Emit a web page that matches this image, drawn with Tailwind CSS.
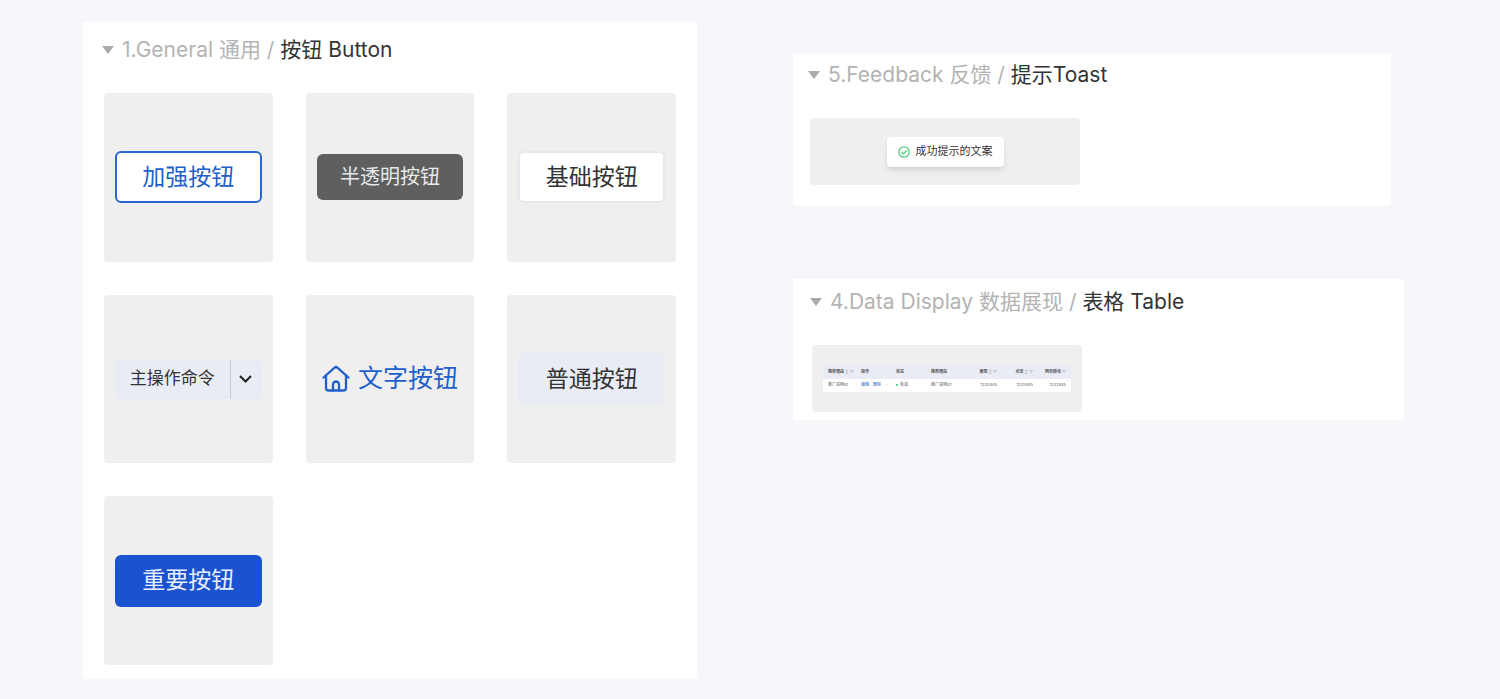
<!DOCTYPE html>
<html lang="zh-CN">

<head>
    <meta charset="UTF-8">
    <meta name="viewport" content="width=device-width, initial-scale=1.0">
    <title>组件库</title>
    <script src="https://cdn.jsdelivr.net/npm/@tailwindcss/browser@4"></script>
</head>

<body class="bg-[#f5f7fb] font-['Inter','Noto_Sans_CJK_SC',sans-serif] text-[#333]">

    <main class="grid grid-cols-[614fr_611fr] items-start gap-24 pt-[22px] pr-24 pb-5 pl-[83px]">

        <!-- Button -->
        <details open class="bg-white px-[21px] pt-[14px] pb-[14px]">
            <summary class="-ml-0.5 flex h-7 list-none items-center gap-2">
                <svg class="h-2 w-3" viewBox="0 0 12 8" fill="#aaa"><path d="M0 0h12L6 8z" /></svg>
                <h2 class="text-[21px] whitespace-pre"><span class="text-[#b3b3b3]">1.General 通用 / </span>按钮 Button</h2>
            </summary>
            <div class="mt-[29px] grid grid-cols-3 gap-x-[33px] gap-y-[33px]">
                <div class="flex aspect-square items-center rounded bg-[#efefef] px-[11px]">
                    <button class="h-[52px] w-full rounded-md border-2 border-[#2a66cf] bg-white text-[23px] text-[#2160cb]">加强按钮</button>
                </div>
                <div class="flex aspect-square items-center rounded bg-[#efefef] px-[11px]">
                    <button class="h-[46px] w-full rounded-md bg-[#5f5f5f] text-xl text-[#e8e8e8]">半透明按钮</button>
                </div>
                <div class="flex aspect-square items-center rounded bg-[#efefef] px-[11px]">
                    <button class="h-[52px] w-full rounded-md border-2 border-[#e6e8ef] bg-white text-[23px]">基础按钮</button>
                </div>
                <div class="flex aspect-square items-center rounded bg-[#efefef] px-[11px]">
                    <div class="flex h-[39px] w-full rounded bg-[#e9ecf5]">
                        <button class="flex-1 text-[17px]">主操作命令</button>
                        <button class="flex w-8 items-center justify-center border-l border-[#c8cad2]" aria-label="更多">
                            <svg class="h-3 w-4" viewBox="0 0 16 12" fill="none" stroke="#222" stroke-width="2"><path d="M2 3l5.500 5.500L13 3" /></svg>
                        </button>
                    </div>
                </div>
                <div class="flex aspect-square items-center rounded bg-[#efefef] px-[11px]">
                    <button class="flex w-full items-center justify-center gap-2 text-[25px] text-[#2160cb]">
                        <svg class="h-7 w-7" viewBox="0 0 28 28" fill="none" stroke="currentColor" stroke-width="2.300" stroke-linecap="round" stroke-linejoin="round">
                            <path d="M1.500 12.500L12.600 2.600a2.100 2.100 0 0 1 2.800 0L26.500 12.500" />
                            <path d="M4 10.500v12.500a2.500 2.500 0 0 0 2.500 2.500h15a2.500 2.500 0 0 0 2.500-2.500V10.500" />
                            <path d="M11 25.500v-6a3 3 0 0 1 6 0v6" />
                        </svg>
                        文字按钮
                    </button>
                </div>
                <div class="flex aspect-square items-center rounded bg-[#efefef] px-[11px]">
                    <button class="h-[52px] w-full rounded-md bg-[#e9ecf5] text-[23px]">普通按钮</button>
                </div>
                <div class="flex aspect-square items-center rounded bg-[#efefef] px-[11px]">
                    <button class="h-[52px] w-full rounded-md bg-[#1a52d0] text-[23px] text-[#e8f0ff]">重要按钮</button>
                </div>
            </div>
        </details>

        <div class="mt-8 flex flex-col gap-[73px]">

            <!-- Toast -->
            <details open class="mr-[13px] bg-white px-[17px] pt-[7px] pb-[21px]">
                <summary class="-ml-0.5 flex h-7 list-none items-center gap-2">
                    <svg class="h-2 w-3" viewBox="0 0 12 8" fill="#aaa"><path d="M0 0h12L6 8z" /></svg>
                    <h2 class="text-[21px] whitespace-pre"><span class="text-[#b3b3b3]">5.Feedback 反馈 / </span>提示Toast</h2>
                </summary>
                <div class="mt-[29px] flex h-[67px] w-[270px] items-center justify-center rounded bg-[#efefef]">
                    <div role="status" class="flex h-[30px] items-center gap-1.5 rounded-sm bg-white px-[11px] text-[11px] shadow-md">
                        <svg class="h-3 w-3" viewBox="0 0 12 12" fill="none" stroke="#4fd07f" stroke-width="1.300"><circle cx="6" cy="6" r="5.200" /><path d="M3.500 6l1.900 1.900L8.700 4.500" /></svg>
                        成功提示的文案
                    </div>
                </div>
            </details>

            <!-- Table -->
            <details open class="bg-white px-[19px] pt-[9px] pb-2">
                <summary class="-ml-0.5 flex h-7 list-none items-center gap-2">
                    <svg class="h-2 w-3" viewBox="0 0 12 8" fill="#aaa"><path d="M0 0h12L6 8z" /></svg>
                    <h2 class="text-[21px] whitespace-pre"><span class="text-[#b3b3b3]">4.Data Display 数据展现 / </span>表格 Table</h2>
                </summary>
                <div class="mt-[29px] flex h-[67px] w-[270px] items-center justify-center rounded bg-[#efefef]">
                    <table class="w-[248px] table-fixed text-left text-[4px] leading-none whitespace-nowrap text-[#555]">
                        <colgroup>
                            <col class="w-[33px]">
                            <col class="w-[35px]">
                            <col class="w-[35px]">
                            <col class="w-[40px]">
                            <col class="w-[36px]">
                            <col class="w-[36px]">
                            <col class="w-[33px]">
                        </colgroup>
                        <thead class="bg-[#e9ecf5]">
                            <tr class="h-[13px]">
                                <th class="pl-[5px]">推荐理由 <span class="font-normal text-[#999]">↕ ▽</span></th>
                                <th class="pl-[5px]">操作</th>
                                <th class="pl-[5px]">状态</th>
                                <th class="pl-[5px]">推荐理由</th>
                                <th class="pr-[5px] text-right">展现 <span class="font-normal text-[#999]">↕ ▽</span></th>
                                <th class="pr-[5px] text-right">点击 <span class="font-normal text-[#999]">↕ ▽</span></th>
                                <th class="pr-[5px] text-right">网页转化 <span class="font-normal text-[#999]">▽</span></th>
                            </tr>
                        </thead>
                        <tbody class="bg-white">
                            <tr class="h-[13px]">
                                <td class="pl-[5px]">推广说明01</td>
                                <td class="pl-[5px]">
                                    <div class="flex gap-1">
                                        <a href="#" class="text-[#2160cb]">编辑</a>
                                        <a href="#" class="text-[#2160cb]">删除</a>
                                        <span class="text-[#999]">···</span>
                                    </div>
                                </td>
                                <td class="pl-[5px]"><span class="mr-0.5 inline-block size-0.5 rounded-full bg-[#2fc46b] align-middle"></span>有效</td>
                                <td class="pl-[5px]">推广说明01</td>
                                <td class="pr-[5px] text-right">1232445</td>
                                <td class="pr-[5px] text-right">1232445</td>
                                <td class="pr-[5px] text-right">1232445</td>
                            </tr>
                        </tbody>
                    </table>
                </div>
            </details>
        </div>
    </main>

</body>

</html>
